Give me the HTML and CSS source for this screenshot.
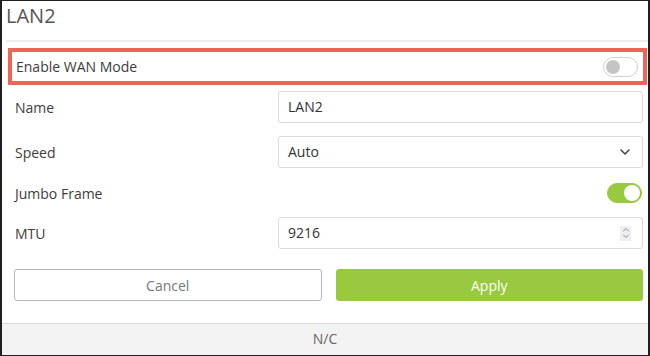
FILE: index.html
```html
<!DOCTYPE html>
<html lang="en">
<head>
  <meta charset="UTF-8" />
  <title>LAN2</title>
  <link rel="stylesheet" href="styles.css">
</head>
<body>
  <div class="panel">
    <div class="panel-head">LAN2</div>

    <div class="form">
      <div class="row highlight">
        <span class="label">Enable WAN Mode</span>
        <span class="toggle"><span class="knob"></span></span>
      </div>

      <div class="row field name-row">
        <span class="label">Name</span>
        <div class="input">LAN2</div>
      </div>

      <div class="row field speed-row">
        <span class="label">Speed</span>
        <div class="input">
          Auto
          <svg class="chevron" width="10" height="6" viewBox="0 0 10 6">
            <path d="M1 1l4 4 4-4" fill="none" stroke="#3a3f44" stroke-width="1.5" stroke-linecap="round" stroke-linejoin="round"/>
          </svg>
        </div>
      </div>

      <div class="row jumbo-row">
        <span class="label">Jumbo Frame</span>
        <span class="toggle on"><span class="knob"></span></span>
      </div>

      <div class="row field mtu-row">
        <span class="label">MTU</span>
        <div class="input">
          9216
          <span class="spinner">
            <svg width="8" height="12" viewBox="0 0 8 12">
              <path d="M1.5 4l2.5-2.5 2.5 2.5M1.5 8l2.5 2.5 2.5-2.5" fill="none" stroke="#8a9096" stroke-width="1" stroke-linecap="round" stroke-linejoin="round"/>
            </svg>
          </span>
        </div>
      </div>

      <div class="actions">
        <button class="btn cancel">Cancel</button>
        <button class="btn apply">Apply</button>
      </div>
    </div>

    <div class="panel-foot">N/C</div>
  </div>
</body>
</html>
```

FILE: styles.css
```css
* {
  box-sizing: border-box;
}
body {
  margin: 0;
  font-family: "Open Sans", "Liberation Sans", sans-serif;
  color: #3d3d3d;
  background: #fff;
}
.panel {
  width: 650px;
  height: 356px;
  border: 2px solid #1f1f1f;
  border-top-width: 1px;
  border-bottom-width: 1px;
  display: flex;
  flex-direction: column;
  overflow: hidden;
}
.panel-head {
  height: 41px;
  margin-left: 4px;
  padding: 2px 0 0 0;
  font-size: 20px;
  line-height: 26px;
  color: #555;
  border-bottom: 2px solid #ececec;
}
.form {
  padding: 0 5px 0 13px;
}
.row {
  display: flex;
  align-items: center;
  justify-content: space-between;
  font-size: 14px;
}
.highlight {
  height: 37px;
  margin: 6px -4px 0 -7px;
  padding: 0 4px 0 4px;
  border: 4px solid #ee6557;
}
.field {
  height: 32px;
}
.name-row {
  margin-top: 6px;
}
.speed-row {
  margin-top: 13px;
}
.jumbo-row {
  height: 28px;
  margin-top: 11px;
}
.mtu-row {
  margin-top: 10px;
}
.input {
  width: 365px;
  height: 32px;
  border: 1px solid #d6dce1;
  border-radius: 3px;
  padding: 0 9px;
  line-height: 30px;
  display: flex;
  align-items: center;
  justify-content: space-between;
  color: #333;
}
.chevron {
  margin-right: 3px;
}
.spinner {
  width: 11px;
  height: 15px;
  background: #eceef1;
  display: flex;
  align-items: center;
  justify-content: center;
  margin-right: 2px;
}
.toggle {
  position: relative;
  width: 35px;
  height: 20px;
  border-radius: 10px;
  border: 1px solid #d0d0d0;
  background: #fff;
  margin-right: 1px;
}
.toggle .knob {
  position: absolute;
  top: 2px;
  left: 2px;
  width: 14px;
  height: 14px;
  border-radius: 50%;
  background: #c4c4c4;
}
.toggle.on {
  background: #98c93e;
  border-color: #98c93e;
}
.toggle.on .knob {
  left: auto;
  right: 1px;
  top: 1px;
  width: 16px;
  height: 16px;
  background: #fff;
}
.actions {
  display: flex;
  gap: 14px;
  margin: 20px 0 0 -1px;
}
.btn {
  flex: 1;
  height: 32px;
  border-radius: 3px;
  font-family: inherit;
  font-size: 14px;
  cursor: pointer;
}
.cancel {
  background: #fff;
  border: 1px solid #b4b8bc;
  color: #777;
}
.apply {
  background: #98c93e;
  border: 1px solid #98c93e;
  color: #fff;
}
.panel-foot {
  margin-top: auto;
  height: 32px;
  background: #f3f3f3;
  border-top: 1px solid #dcdcdc;
  text-align: center;
  font-size: 14px;
  line-height: 30px;
  color: #666;
}
```
